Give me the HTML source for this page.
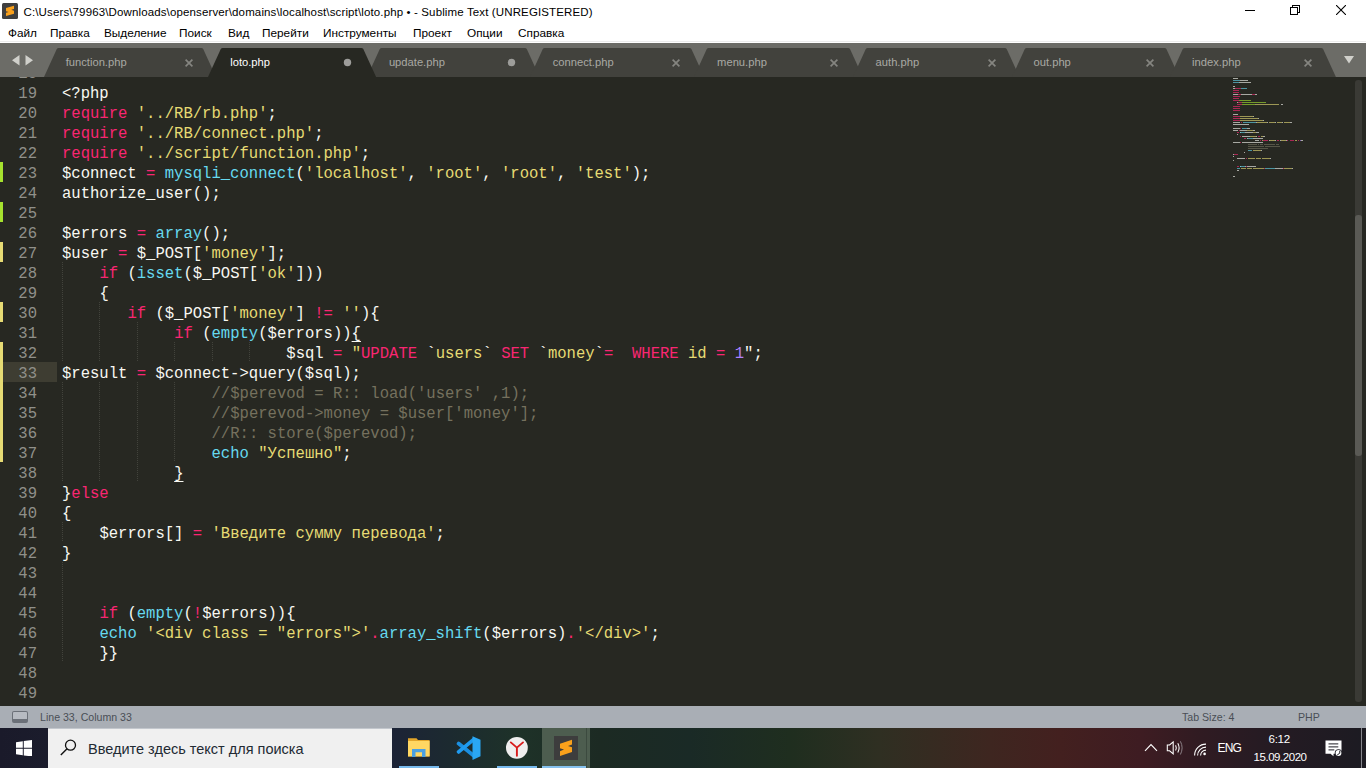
<!DOCTYPE html><html><head><meta charset="utf-8"><style>
*{margin:0;padding:0;box-sizing:border-box}
html,body{width:1366px;height:768px;overflow:hidden;background:#272822}
body{position:relative;font-family:"Liberation Sans",sans-serif}
.a{position:absolute}
.code{position:absolute;margin-top:2px;font-family:"Liberation Mono",monospace;font-size:15.574px;line-height:20px;height:20px;white-space:pre;color:#f8f8f2}
.gn{position:absolute;margin-top:2px;left:0;width:37px;text-align:right;font-family:"Liberation Mono",monospace;font-size:15.574px;line-height:20px;height:20px;color:#90908a}
.tab{position:absolute;font-size:11.2px;line-height:14px;white-space:nowrap}
.mn{position:absolute;top:26px;font-size:11.8px;line-height:15px;color:#000;white-space:nowrap}
.u{text-decoration:underline;text-underline-offset:3px}
</style></head><body>

<div class="a" style="left:0;top:0;width:1366px;height:43px;background:#fff"></div>
<div class="a" style="left:0;top:41px;width:1366px;height:1px;background:#ececec"></div>
<svg class="a" style="left:2px;top:3px" width="16" height="16" viewBox="0 0 16 16"><rect x="0" y="0" width="16" height="16" rx="1.5" fill="#3f3f3f"/><path d="M4 5 L12 2.8 L12 6 L9.3 6.8 L12 7.7 L12 10.8 L4 13 L4 9.8 L6.7 9.1 L4 8.3 Z" fill="#fba11b"/></svg>
<div class="a" style="left:23.5px;top:5px;font-size:11.5px;letter-spacing:0.13px;line-height:15px;color:#000;white-space:nowrap">C:\Users\79963\Downloads\openserver\domains\localhost\script\loto.php • - Sublime Text (UNREGISTERED)</div>
<div class="a" style="left:1245px;top:10px;width:10px;height:1px;background:#000"></div>
<div class="a" style="left:1292px;top:5px;width:8px;height:8px;border:1px solid #000"></div>
<div class="a" style="left:1290px;top:7px;width:8px;height:8px;border:1px solid #000;background:#fff"></div>
<svg class="a" style="left:1336px;top:5px" width="10" height="10"><path d="M0 0 L10 10 M10 0 L0 10" stroke="#000" stroke-width="1.1"/></svg>
<div class="mn" style="left:8px">Файл</div>
<div class="mn" style="left:50px">Правка</div>
<div class="mn" style="left:104px">Выделение</div>
<div class="mn" style="left:179px">Поиск</div>
<div class="mn" style="left:228px">Вид</div>
<div class="mn" style="left:262px">Перейти</div>
<div class="mn" style="left:323px">Инструменты</div>
<div class="mn" style="left:413px">Проект</div>
<div class="mn" style="left:467px">Опции</div>
<div class="mn" style="left:518px">Справка</div>
<div class="a" style="left:0;top:43px;width:1366px;height:34px;background:#6c6c67"></div>
<svg class="a" style="left:11.5px;top:55px" width="22" height="11"><path d="M0 5.2 L7.5 0 L7.5 10.4 Z M13.5 0 L21 5.2 L13.5 10.4 Z" fill="#d0d0cb"/></svg>
<svg class="a" style="left:44.30px;top:48px" width="172.00" height="29" viewBox="0 0 172.00 29"><path d="M0 29 L12.80 1.1 Q13.40 0 14.70 0 L157.30 0 Q158.60 0 159.20 1.1 L172.00 29 Z" fill="#42423d"/></svg>
<svg class="a" style="left:366.70px;top:48px" width="172.60" height="29" viewBox="0 0 172.60 29"><path d="M0 29 L12.80 1.1 Q13.40 0 14.70 0 L157.90 0 Q159.20 0 159.80 1.1 L172.60 29 Z" fill="#42423d"/></svg>
<svg class="a" style="left:529.90px;top:48px" width="174.20" height="29" viewBox="0 0 174.20 29"><path d="M0 29 L12.80 1.1 Q13.40 0 14.70 0 L159.50 0 Q160.80 0 161.40 1.1 L174.20 29 Z" fill="#42423d"/></svg>
<svg class="a" style="left:694.30px;top:48px" width="168.80" height="29" viewBox="0 0 168.80 29"><path d="M0 29 L12.80 1.1 Q13.40 0 14.70 0 L154.10 0 Q155.40 0 156.00 1.1 L168.80 29 Z" fill="#42423d"/></svg>
<svg class="a" style="left:853.20px;top:48px" width="166.50" height="29" viewBox="0 0 166.50 29"><path d="M0 29 L12.80 1.1 Q13.40 0 14.70 0 L151.80 0 Q153.10 0 153.70 1.1 L166.50 29 Z" fill="#42423d"/></svg>
<svg class="a" style="left:1011.50px;top:48px" width="167.20" height="29" viewBox="0 0 167.20 29"><path d="M0 29 L12.80 1.1 Q13.40 0 14.70 0 L152.50 0 Q153.80 0 154.40 1.1 L167.20 29 Z" fill="#42423d"/></svg>
<svg class="a" style="left:1169.70px;top:48px" width="165.90" height="29" viewBox="0 0 165.90 29"><path d="M0 29 L12.80 1.1 Q13.40 0 14.70 0 L151.20 0 Q152.50 0 153.10 1.1 L165.90 29 Z" fill="#42423d"/></svg>
<svg class="a" style="left:207.70px;top:48px" width="168.10" height="29" viewBox="0 0 168.10 29"><path d="M0 29 L12.80 1.1 Q13.40 0 14.70 0 L153.40 0 Q154.70 0 155.30 1.1 L168.10 29 Z" fill="#272822"/></svg>
<div class="tab" style="left:65.7px;top:55.4px;color:#a9a9a4">function.php</div>
<svg class="a" style="left:184.50px;top:58.5px" width="8" height="8"><path d="M0.6 0.6 L7.4 7.4 M7.4 0.6 L0.6 7.4" stroke="#858580" stroke-width="1.7"/></svg>
<div class="tab" style="left:230.2px;top:55.4px;color:#ffffff">loto.php</div>
<svg class="a" style="left:343.00px;top:58px" width="9" height="9"><circle cx="4.5" cy="4.5" r="3.7" fill="#9d9d9a"/></svg>
<div class="tab" style="left:388.9px;top:55.4px;color:#a9a9a4">update.php</div>
<svg class="a" style="left:506.90px;top:58px" width="9" height="9"><circle cx="4.5" cy="4.5" r="3.7" fill="#9d9d9a"/></svg>
<div class="tab" style="left:552.7px;top:55.4px;color:#a9a9a4">connect.php</div>
<svg class="a" style="left:671.50px;top:58.5px" width="8" height="8"><path d="M0.6 0.6 L7.4 7.4 M7.4 0.6 L0.6 7.4" stroke="#858580" stroke-width="1.7"/></svg>
<div class="tab" style="left:717.1px;top:55.4px;color:#a9a9a4">menu.php</div>
<svg class="a" style="left:830.30px;top:58.5px" width="8" height="8"><path d="M0.6 0.6 L7.4 7.4 M7.4 0.6 L0.6 7.4" stroke="#858580" stroke-width="1.7"/></svg>
<div class="tab" style="left:875.6px;top:55.4px;color:#a9a9a4">auth.php</div>
<svg class="a" style="left:988.30px;top:58.5px" width="8" height="8"><path d="M0.6 0.6 L7.4 7.4 M7.4 0.6 L0.6 7.4" stroke="#858580" stroke-width="1.7"/></svg>
<div class="tab" style="left:1033.5px;top:55.4px;color:#a9a9a4">out.php</div>
<svg class="a" style="left:1146.00px;top:58.5px" width="8" height="8"><path d="M0.6 0.6 L7.4 7.4 M7.4 0.6 L0.6 7.4" stroke="#858580" stroke-width="1.7"/></svg>
<div class="tab" style="left:1192.1px;top:55.4px;color:#a9a9a4">index.php</div>
<svg class="a" style="left:1304.30px;top:58.5px" width="8" height="8"><path d="M0.6 0.6 L7.4 7.4 M7.4 0.6 L0.6 7.4" stroke="#858580" stroke-width="1.7"/></svg>
<svg class="a" style="left:1344px;top:56px" width="10" height="8"><path d="M0 0 L10 0 L5 7.5 Z" fill="#d0d0cb"/></svg>
<div class="a" style="left:0;top:77px;width:1366px;height:629px;overflow:hidden;background:#272822"><div class="a" style="left:0;top:-77px;width:1366px;height:768px">
<div class="gn" style="top:62px">18</div>
<div class="gn" style="top:82px">19</div>
<div class="code" style="top:82px;left:62.00px"><span style="color:#f8f8f2">&lt;?php</span></div>
<div class="gn" style="top:102px">20</div>
<div class="code" style="top:102px;left:62.00px"><span style="color:#f92672">require</span><span style="color:#f8f8f2"> </span><span style="color:#e6db74">&#x27;../RB/rb.php&#x27;</span><span style="color:#f8f8f2">;</span></div>
<div class="gn" style="top:122px">21</div>
<div class="code" style="top:122px;left:62.00px"><span style="color:#f92672">require</span><span style="color:#f8f8f2"> </span><span style="color:#e6db74">&#x27;../RB/connect.php&#x27;</span><span style="color:#f8f8f2">;</span></div>
<div class="gn" style="top:142px">22</div>
<div class="code" style="top:142px;left:62.00px"><span style="color:#f92672">require</span><span style="color:#f8f8f2"> </span><span style="color:#e6db74">&#x27;../script/function.php&#x27;</span><span style="color:#f8f8f2">;</span></div>
<div class="a" style="left:0;top:162px;width:3px;height:20px;background:#a6e22e"></div>
<div class="gn" style="top:162px">23</div>
<div class="code" style="top:162px;left:62.00px"><span style="color:#f8f8f2">$connect </span><span style="color:#f92672">=</span><span style="color:#f8f8f2"> </span><span style="color:#66d9ef">mysqli_connect</span><span style="color:#f8f8f2">(</span><span style="color:#e6db74">&#x27;localhost&#x27;</span><span style="color:#f8f8f2">, </span><span style="color:#e6db74">&#x27;root&#x27;</span><span style="color:#f8f8f2">, </span><span style="color:#e6db74">&#x27;root&#x27;</span><span style="color:#f8f8f2">, </span><span style="color:#e6db74">&#x27;test&#x27;</span><span style="color:#f8f8f2">);</span></div>
<div class="gn" style="top:182px">24</div>
<div class="code" style="top:182px;left:62.00px"><span style="color:#f8f8f2">authorize_user();</span></div>
<div class="a" style="left:0;top:202px;width:3px;height:20px;background:#a6e22e"></div>
<div class="gn" style="top:202px">25</div>
<div class="gn" style="top:222px">26</div>
<div class="code" style="top:222px;left:62.00px"><span style="color:#f8f8f2">$errors </span><span style="color:#f92672">=</span><span style="color:#f8f8f2"> </span><span style="color:#66d9ef">array</span><span style="color:#f8f8f2">();</span></div>
<div class="a" style="left:0;top:242px;width:3px;height:20px;background:#e6db74"></div>
<div class="gn" style="top:242px">27</div>
<div class="code" style="top:242px;left:62.00px"><span style="color:#f8f8f2">$user </span><span style="color:#f92672">=</span><span style="color:#f8f8f2"> $_POST[</span><span style="color:#e6db74">&#x27;money&#x27;</span><span style="color:#f8f8f2">];</span></div>
<div class="gn" style="top:262px">28</div>
<div class="a" style="left:62px;top:262px;width:1px;height:20px;background:repeating-linear-gradient(#42433c 0 1px,transparent 1px 2px)"></div>
<div class="code" style="top:262px;left:99.38px"><span style="color:#f92672">if</span><span style="color:#f8f8f2"> (</span><span style="color:#66d9ef">isset</span><span style="color:#f8f8f2">($_POST[</span><span style="color:#e6db74">&#x27;ok&#x27;</span><span style="color:#f8f8f2">]))</span></div>
<div class="gn" style="top:282px">29</div>
<div class="a" style="left:62px;top:282px;width:1px;height:20px;background:repeating-linear-gradient(#42433c 0 1px,transparent 1px 2px)"></div>
<div class="code" style="top:282px;left:99.38px"><span style="color:#f8f8f2">{</span></div>
<div class="a" style="left:0;top:302px;width:3px;height:20px;background:#e6db74"></div>
<div class="gn" style="top:302px">30</div>
<div class="a" style="left:62px;top:302px;width:1px;height:20px;background:repeating-linear-gradient(#42433c 0 1px,transparent 1px 2px)"></div>
<div class="a" style="left:99px;top:302px;width:1px;height:20px;background:repeating-linear-gradient(#42433c 0 1px,transparent 1px 2px)"></div>
<div class="code" style="top:302px;left:127.42px"><span style="color:#f92672">if</span><span style="color:#f8f8f2"> ($_POST[</span><span style="color:#e6db74">&#x27;money&#x27;</span><span style="color:#f8f8f2">] </span><span style="color:#f92672">!=</span><span style="color:#f8f8f2"> </span><span style="color:#e6db74">&#x27;&#x27;</span><span style="color:#f8f8f2">){</span></div>
<div class="gn" style="top:322px">31</div>
<div class="a" style="left:62px;top:322px;width:1px;height:20px;background:repeating-linear-gradient(#42433c 0 1px,transparent 1px 2px)"></div>
<div class="a" style="left:99px;top:322px;width:1px;height:20px;background:repeating-linear-gradient(#42433c 0 1px,transparent 1px 2px)"></div>
<div class="a" style="left:137px;top:322px;width:1px;height:20px;background:repeating-linear-gradient(#42433c 0 1px,transparent 1px 2px)"></div>
<div class="code" style="top:322px;left:174.15px"><span style="color:#f92672">if</span><span style="color:#f8f8f2"> (</span><span style="color:#66d9ef">empty</span><span style="color:#f8f8f2">($errors))</span><span class="u">{</span></div>
<div class="a" style="left:0;top:342px;width:3px;height:20px;background:#e6db74"></div>
<div class="gn" style="top:342px">32</div>
<div class="a" style="left:62px;top:342px;width:1px;height:20px;background:repeating-linear-gradient(#42433c 0 1px,transparent 1px 2px)"></div>
<div class="a" style="left:99px;top:342px;width:1px;height:20px;background:repeating-linear-gradient(#42433c 0 1px,transparent 1px 2px)"></div>
<div class="a" style="left:137px;top:342px;width:1px;height:20px;background:repeating-linear-gradient(#42433c 0 1px,transparent 1px 2px)"></div>
<div class="a" style="left:174px;top:342px;width:1px;height:20px;background:repeating-linear-gradient(#42433c 0 1px,transparent 1px 2px)"></div>
<div class="a" style="left:212px;top:342px;width:1px;height:20px;background:repeating-linear-gradient(#42433c 0 1px,transparent 1px 2px)"></div>
<div class="a" style="left:249px;top:342px;width:1px;height:20px;background:repeating-linear-gradient(#42433c 0 1px,transparent 1px 2px)"></div>
<div class="code" style="top:342px;left:286.30px"><span style="color:#f8f8f2">$sql </span><span style="color:#f92672">=</span><span style="color:#f8f8f2"> </span><span style="color:#e6db74">&quot;</span><span style="color:#f92672">UPDATE</span><span style="color:#f8f8f2"> </span><span style="color:#f8f8f2">`</span><span style="color:#e6db74">users</span><span style="color:#f8f8f2">`</span><span style="color:#f8f8f2"> </span><span style="color:#f92672">SET</span><span style="color:#f8f8f2"> </span><span style="color:#f8f8f2">`</span><span style="color:#e6db74">money</span><span style="color:#f8f8f2">`</span><span style="color:#f92672">=</span><span style="color:#f8f8f2">  </span><span style="color:#f92672">WHERE</span><span style="color:#f8f8f2"> </span><span style="color:#e6db74">id</span><span style="color:#f8f8f2"> </span><span style="color:#f92672">=</span><span style="color:#f8f8f2"> </span><span style="color:#ae81ff">1</span><span style="color:#f8f8f2">&quot;</span><span style="color:#f8f8f2">;</span></div>
<div class="a" style="left:0;top:362px;width:3px;height:20px;background:#e6db74"></div>
<div class="a" style="left:3px;top:362px;width:54px;height:20px;background:#3e3d32"></div>
<div class="gn" style="top:362px">33</div>
<div class="code" style="top:362px;left:62.00px"><span style="color:#f8f8f2">$result </span><span style="color:#f92672">=</span><span style="color:#f8f8f2"> $connect-&gt;query($sql);</span></div>
<div class="a" style="left:0;top:382px;width:3px;height:20px;background:#e6db74"></div>
<div class="gn" style="top:382px">34</div>
<div class="a" style="left:62px;top:382px;width:1px;height:20px;background:repeating-linear-gradient(#42433c 0 1px,transparent 1px 2px)"></div>
<div class="a" style="left:99px;top:382px;width:1px;height:20px;background:repeating-linear-gradient(#42433c 0 1px,transparent 1px 2px)"></div>
<div class="a" style="left:137px;top:382px;width:1px;height:20px;background:repeating-linear-gradient(#42433c 0 1px,transparent 1px 2px)"></div>
<div class="a" style="left:174px;top:382px;width:1px;height:20px;background:repeating-linear-gradient(#42433c 0 1px,transparent 1px 2px)"></div>
<div class="code" style="top:382px;left:211.54px"><span style="color:#75715e">//$perevod = R:: load(&#x27;users&#x27; ,1);</span></div>
<div class="a" style="left:0;top:402px;width:3px;height:20px;background:#e6db74"></div>
<div class="gn" style="top:402px">35</div>
<div class="a" style="left:62px;top:402px;width:1px;height:20px;background:repeating-linear-gradient(#42433c 0 1px,transparent 1px 2px)"></div>
<div class="a" style="left:99px;top:402px;width:1px;height:20px;background:repeating-linear-gradient(#42433c 0 1px,transparent 1px 2px)"></div>
<div class="a" style="left:137px;top:402px;width:1px;height:20px;background:repeating-linear-gradient(#42433c 0 1px,transparent 1px 2px)"></div>
<div class="a" style="left:174px;top:402px;width:1px;height:20px;background:repeating-linear-gradient(#42433c 0 1px,transparent 1px 2px)"></div>
<div class="code" style="top:402px;left:211.54px"><span style="color:#75715e">//$perevod-&gt;money = $user[&#x27;money&#x27;];</span></div>
<div class="a" style="left:0;top:422px;width:3px;height:20px;background:#e6db74"></div>
<div class="gn" style="top:422px">36</div>
<div class="a" style="left:62px;top:422px;width:1px;height:20px;background:repeating-linear-gradient(#42433c 0 1px,transparent 1px 2px)"></div>
<div class="a" style="left:99px;top:422px;width:1px;height:20px;background:repeating-linear-gradient(#42433c 0 1px,transparent 1px 2px)"></div>
<div class="a" style="left:137px;top:422px;width:1px;height:20px;background:repeating-linear-gradient(#42433c 0 1px,transparent 1px 2px)"></div>
<div class="a" style="left:174px;top:422px;width:1px;height:20px;background:repeating-linear-gradient(#42433c 0 1px,transparent 1px 2px)"></div>
<div class="code" style="top:422px;left:211.54px"><span style="color:#75715e">//R:: store($perevod);</span></div>
<div class="a" style="left:0;top:442px;width:3px;height:20px;background:#e6db74"></div>
<div class="gn" style="top:442px">37</div>
<div class="a" style="left:62px;top:442px;width:1px;height:20px;background:repeating-linear-gradient(#42433c 0 1px,transparent 1px 2px)"></div>
<div class="a" style="left:99px;top:442px;width:1px;height:20px;background:repeating-linear-gradient(#42433c 0 1px,transparent 1px 2px)"></div>
<div class="a" style="left:137px;top:442px;width:1px;height:20px;background:repeating-linear-gradient(#42433c 0 1px,transparent 1px 2px)"></div>
<div class="a" style="left:174px;top:442px;width:1px;height:20px;background:repeating-linear-gradient(#42433c 0 1px,transparent 1px 2px)"></div>
<div class="code" style="top:442px;left:211.54px"><span style="color:#66d9ef">echo</span><span style="color:#f8f8f2"> </span><span style="color:#e6db74">&quot;Успешно&quot;</span><span style="color:#f8f8f2">;</span></div>
<div class="gn" style="top:462px">38</div>
<div class="a" style="left:62px;top:462px;width:1px;height:20px;background:repeating-linear-gradient(#42433c 0 1px,transparent 1px 2px)"></div>
<div class="a" style="left:99px;top:462px;width:1px;height:20px;background:repeating-linear-gradient(#42433c 0 1px,transparent 1px 2px)"></div>
<div class="a" style="left:137px;top:462px;width:1px;height:20px;background:repeating-linear-gradient(#42433c 0 1px,transparent 1px 2px)"></div>
<div class="code" style="top:462px;left:174.15px"><span class="u">}</span></div>
<div class="gn" style="top:482px">39</div>
<div class="code" style="top:482px;left:62.00px"><span style="color:#f8f8f2">}</span><span style="color:#f92672">else</span></div>
<div class="gn" style="top:502px">40</div>
<div class="code" style="top:502px;left:62.00px"><span style="color:#f8f8f2">{</span></div>
<div class="gn" style="top:522px">41</div>
<div class="a" style="left:62px;top:522px;width:1px;height:20px;background:repeating-linear-gradient(#42433c 0 1px,transparent 1px 2px)"></div>
<div class="code" style="top:522px;left:99.38px"><span style="color:#f8f8f2">$errors[] </span><span style="color:#f92672">=</span><span style="color:#f8f8f2"> </span><span style="color:#e6db74">&#x27;Введите сумму перевода&#x27;</span><span style="color:#f8f8f2">;</span></div>
<div class="gn" style="top:542px">42</div>
<div class="code" style="top:542px;left:62.00px"><span style="color:#f8f8f2">}</span></div>
<div class="gn" style="top:562px">43</div>
<div class="a" style="left:62px;top:562px;width:1px;height:20px;background:repeating-linear-gradient(#42433c 0 1px,transparent 1px 2px)"></div>
<div class="gn" style="top:582px">44</div>
<div class="a" style="left:62px;top:582px;width:1px;height:20px;background:repeating-linear-gradient(#42433c 0 1px,transparent 1px 2px)"></div>
<div class="gn" style="top:602px">45</div>
<div class="a" style="left:62px;top:602px;width:1px;height:20px;background:repeating-linear-gradient(#42433c 0 1px,transparent 1px 2px)"></div>
<div class="code" style="top:602px;left:99.38px"><span style="color:#f92672">if</span><span style="color:#f8f8f2"> (</span><span style="color:#66d9ef">empty</span><span style="color:#f8f8f2">(</span><span style="color:#f92672">!</span><span style="color:#f8f8f2">$errors)){</span></div>
<div class="gn" style="top:622px">46</div>
<div class="a" style="left:62px;top:622px;width:1px;height:20px;background:repeating-linear-gradient(#42433c 0 1px,transparent 1px 2px)"></div>
<div class="code" style="top:622px;left:99.38px"><span style="color:#66d9ef">echo</span><span style="color:#f8f8f2"> </span><span style="color:#e6db74">&#x27;&lt;div class = &quot;errors&quot;&gt;&#x27;</span><span style="color:#f92672">.</span><span style="color:#66d9ef">array_shift</span><span style="color:#f8f8f2">($errors)</span><span style="color:#f92672">.</span><span style="color:#e6db74">&#x27;&lt;/div&gt;&#x27;</span><span style="color:#f8f8f2">;</span></div>
<div class="gn" style="top:642px">47</div>
<div class="a" style="left:62px;top:642px;width:1px;height:20px;background:repeating-linear-gradient(#42433c 0 1px,transparent 1px 2px)"></div>
<div class="code" style="top:642px;left:99.38px"><span style="color:#f8f8f2">}}</span></div>
<div class="gn" style="top:662px">48</div>
<div class="gn" style="top:682px">49</div>
<div class="gn" style="top:702px">50</div>
<div class="code" style="top:702px;left:62.00px"><span style="color:#f8f8f2">?&gt;</span></div>
<div class="a" style="left:1233.00px;top:77.5px;width:4.65px;height:1.1px;background:#f8f8f2;opacity:.62"></div><div class="a" style="left:1233.00px;top:79.5px;width:6.51px;height:1.1px;background:#66d9ef;opacity:.62"></div><div class="a" style="left:1239.51px;top:79.5px;width:8.37px;height:1.1px;background:#f8f8f2;opacity:.62"></div><div class="a" style="left:1233.00px;top:81.5px;width:5.58px;height:1.1px;background:#66d9ef;opacity:.62"></div><div class="a" style="left:1238.58px;top:81.5px;width:12.09px;height:1.1px;background:#f8f8f2;opacity:.62"></div><div class="a" style="left:1233.00px;top:85.5px;width:1.86px;height:1.1px;background:#f8f8f2;opacity:.62"></div><div class="a" style="left:1233.00px;top:87.5px;width:1.86px;height:1.1px;background:#f8f8f2;opacity:.62"></div><div class="a" style="left:1234.86px;top:87.5px;width:6.51px;height:1.1px;background:#f92672;opacity:.62"></div><div class="a" style="left:1241.37px;top:87.5px;width:5.58px;height:1.1px;background:#66d9ef;opacity:.62"></div><div class="a" style="left:1233.00px;top:89.5px;width:5.58px;height:1.1px;background:#f92672;opacity:.62"></div><div class="a" style="left:1233.00px;top:91.5px;width:5.58px;height:1.1px;background:#f92672;opacity:.62"></div><div class="a" style="left:1233.00px;top:93.5px;width:4.65px;height:1.1px;background:#f8f8f2;opacity:.62"></div><div class="a" style="left:1237.65px;top:93.5px;width:3.72px;height:1.1px;background:#f92672;opacity:.62"></div><div class="a" style="left:1241.37px;top:93.5px;width:10.23px;height:1.1px;background:#f8f8f2;opacity:.62"></div><div class="a" style="left:1251.60px;top:93.5px;width:3.72px;height:1.1px;background:#f92672;opacity:.62"></div><div class="a" style="left:1255.32px;top:93.5px;width:1.86px;height:1.1px;background:#f8f8f2;opacity:.62"></div><div class="a" style="left:1233.00px;top:95.5px;width:6.51px;height:1.1px;background:#f92672;opacity:.62"></div><div class="a" style="left:1233.00px;top:97.5px;width:5.58px;height:1.1px;background:#f92672;opacity:.62"></div><div class="a" style="left:1233.00px;top:99.5px;width:5.58px;height:1.1px;background:#f92672;opacity:.62"></div><div class="a" style="left:1238.58px;top:99.5px;width:12.09px;height:1.1px;background:#a6e22e;opacity:.62"></div><div class="a" style="left:1236.72px;top:101.5px;width:0.93px;height:1.1px;background:#f8f8f2;opacity:.62"></div><div class="a" style="left:1237.65px;top:101.5px;width:4.65px;height:1.1px;background:#f92672;opacity:.62"></div><div class="a" style="left:1242.30px;top:101.5px;width:23.25px;height:1.1px;background:#a6e22e;opacity:.62"></div><div class="a" style="left:1236.72px;top:103.5px;width:5.58px;height:1.1px;background:#f92672;opacity:.62"></div><div class="a" style="left:1242.30px;top:103.5px;width:13.02px;height:1.1px;background:#a6e22e;opacity:.62"></div><div class="a" style="left:1255.32px;top:103.5px;width:24.18px;height:1.1px;background:#e6db74;opacity:.62"></div><div class="a" style="left:1281.36px;top:103.5px;width:1.86px;height:1.1px;background:#f8f8f2;opacity:.62"></div><div class="a" style="left:1233.00px;top:105.5px;width:6.51px;height:1.1px;background:#f92672;opacity:.62"></div><div class="a" style="left:1233.00px;top:107.5px;width:6.51px;height:1.1px;background:#f92672;opacity:.62"></div><div class="a" style="left:1233.00px;top:109.5px;width:6.51px;height:1.1px;background:#f92672;opacity:.62"></div><div class="a" style="left:1233.00px;top:113.5px;width:4.65px;height:1.1px;background:#f8f8f2;opacity:.62"></div><div class="a" style="left:1233.00px;top:115.5px;width:6.51px;height:1.1px;background:#f92672;opacity:.62"></div><div class="a" style="left:1240.44px;top:115.5px;width:13.02px;height:1.1px;background:#e6db74;opacity:.62"></div><div class="a" style="left:1253.46px;top:115.5px;width:0.93px;height:1.1px;background:#f8f8f2;opacity:.62"></div><div class="a" style="left:1233.00px;top:117.5px;width:6.51px;height:1.1px;background:#f92672;opacity:.62"></div><div class="a" style="left:1240.44px;top:117.5px;width:17.67px;height:1.1px;background:#e6db74;opacity:.62"></div><div class="a" style="left:1258.11px;top:117.5px;width:0.93px;height:1.1px;background:#f8f8f2;opacity:.62"></div><div class="a" style="left:1233.00px;top:119.5px;width:6.51px;height:1.1px;background:#f92672;opacity:.62"></div><div class="a" style="left:1240.44px;top:119.5px;width:22.32px;height:1.1px;background:#e6db74;opacity:.62"></div><div class="a" style="left:1262.76px;top:119.5px;width:0.93px;height:1.1px;background:#f8f8f2;opacity:.62"></div><div class="a" style="left:1233.00px;top:121.5px;width:7.44px;height:1.1px;background:#f8f8f2;opacity:.62"></div><div class="a" style="left:1241.37px;top:121.5px;width:0.93px;height:1.1px;background:#f92672;opacity:.62"></div><div class="a" style="left:1243.23px;top:121.5px;width:13.02px;height:1.1px;background:#66d9ef;opacity:.62"></div><div class="a" style="left:1256.25px;top:121.5px;width:0.93px;height:1.1px;background:#f8f8f2;opacity:.62"></div><div class="a" style="left:1257.18px;top:121.5px;width:10.23px;height:1.1px;background:#e6db74;opacity:.62"></div><div class="a" style="left:1267.41px;top:121.5px;width:0.93px;height:1.1px;background:#f8f8f2;opacity:.62"></div><div class="a" style="left:1269.27px;top:121.5px;width:5.58px;height:1.1px;background:#e6db74;opacity:.62"></div><div class="a" style="left:1274.85px;top:121.5px;width:0.93px;height:1.1px;background:#f8f8f2;opacity:.62"></div><div class="a" style="left:1276.71px;top:121.5px;width:5.58px;height:1.1px;background:#e6db74;opacity:.62"></div><div class="a" style="left:1282.29px;top:121.5px;width:0.93px;height:1.1px;background:#f8f8f2;opacity:.62"></div><div class="a" style="left:1284.15px;top:121.5px;width:5.58px;height:1.1px;background:#e6db74;opacity:.62"></div><div class="a" style="left:1289.73px;top:121.5px;width:1.86px;height:1.1px;background:#f8f8f2;opacity:.62"></div><div class="a" style="left:1233.00px;top:123.5px;width:15.81px;height:1.1px;background:#f8f8f2;opacity:.62"></div><div class="a" style="left:1233.00px;top:127.5px;width:6.51px;height:1.1px;background:#f8f8f2;opacity:.62"></div><div class="a" style="left:1240.44px;top:127.5px;width:0.93px;height:1.1px;background:#f92672;opacity:.62"></div><div class="a" style="left:1242.30px;top:127.5px;width:4.65px;height:1.1px;background:#66d9ef;opacity:.62"></div><div class="a" style="left:1246.95px;top:127.5px;width:2.79px;height:1.1px;background:#f8f8f2;opacity:.62"></div><div class="a" style="left:1233.00px;top:129.5px;width:4.65px;height:1.1px;background:#f8f8f2;opacity:.62"></div><div class="a" style="left:1238.58px;top:129.5px;width:0.93px;height:1.1px;background:#f92672;opacity:.62"></div><div class="a" style="left:1240.44px;top:129.5px;width:6.51px;height:1.1px;background:#f8f8f2;opacity:.62"></div><div class="a" style="left:1246.95px;top:129.5px;width:6.51px;height:1.1px;background:#e6db74;opacity:.62"></div><div class="a" style="left:1253.46px;top:129.5px;width:1.86px;height:1.1px;background:#f8f8f2;opacity:.62"></div><div class="a" style="left:1236.72px;top:131.5px;width:1.86px;height:1.1px;background:#f92672;opacity:.62"></div><div class="a" style="left:1239.51px;top:131.5px;width:0.93px;height:1.1px;background:#f8f8f2;opacity:.62"></div><div class="a" style="left:1240.44px;top:131.5px;width:4.65px;height:1.1px;background:#66d9ef;opacity:.62"></div><div class="a" style="left:1245.09px;top:131.5px;width:7.44px;height:1.1px;background:#f8f8f2;opacity:.62"></div><div class="a" style="left:1252.53px;top:131.5px;width:3.72px;height:1.1px;background:#e6db74;opacity:.62"></div><div class="a" style="left:1256.25px;top:131.5px;width:2.79px;height:1.1px;background:#f8f8f2;opacity:.62"></div><div class="a" style="left:1236.72px;top:133.5px;width:0.93px;height:1.1px;background:#f8f8f2;opacity:.62"></div><div class="a" style="left:1239.51px;top:135.5px;width:1.86px;height:1.1px;background:#f92672;opacity:.62"></div><div class="a" style="left:1242.30px;top:135.5px;width:7.44px;height:1.1px;background:#f8f8f2;opacity:.62"></div><div class="a" style="left:1249.74px;top:135.5px;width:6.51px;height:1.1px;background:#e6db74;opacity:.62"></div><div class="a" style="left:1256.25px;top:135.5px;width:0.93px;height:1.1px;background:#f8f8f2;opacity:.62"></div><div class="a" style="left:1258.11px;top:135.5px;width:1.86px;height:1.1px;background:#f92672;opacity:.62"></div><div class="a" style="left:1260.90px;top:135.5px;width:1.86px;height:1.1px;background:#e6db74;opacity:.62"></div><div class="a" style="left:1262.76px;top:135.5px;width:1.86px;height:1.1px;background:#f8f8f2;opacity:.62"></div><div class="a" style="left:1244.16px;top:137.5px;width:1.86px;height:1.1px;background:#f92672;opacity:.62"></div><div class="a" style="left:1246.95px;top:137.5px;width:0.93px;height:1.1px;background:#f8f8f2;opacity:.62"></div><div class="a" style="left:1247.88px;top:137.5px;width:4.65px;height:1.1px;background:#66d9ef;opacity:.62"></div><div class="a" style="left:1252.53px;top:137.5px;width:9.30px;height:1.1px;background:#f8f8f2;opacity:.62"></div><div class="a" style="left:1261.83px;top:137.5px;width:0.93px;height:1.1px;background:#f8f8f2;opacity:.62"></div><div class="a" style="left:1255.32px;top:139.5px;width:3.72px;height:1.1px;background:#f8f8f2;opacity:.62"></div><div class="a" style="left:1259.97px;top:139.5px;width:0.93px;height:1.1px;background:#f92672;opacity:.62"></div><div class="a" style="left:1261.83px;top:139.5px;width:0.93px;height:1.1px;background:#e6db74;opacity:.62"></div><div class="a" style="left:1262.76px;top:139.5px;width:5.58px;height:1.1px;background:#f92672;opacity:.62"></div><div class="a" style="left:1269.27px;top:139.5px;width:0.93px;height:1.1px;background:#f8f8f2;opacity:.62"></div><div class="a" style="left:1270.20px;top:139.5px;width:4.65px;height:1.1px;background:#e6db74;opacity:.62"></div><div class="a" style="left:1274.85px;top:139.5px;width:0.93px;height:1.1px;background:#f8f8f2;opacity:.62"></div><div class="a" style="left:1276.71px;top:139.5px;width:2.79px;height:1.1px;background:#f92672;opacity:.62"></div><div class="a" style="left:1280.43px;top:139.5px;width:0.93px;height:1.1px;background:#f8f8f2;opacity:.62"></div><div class="a" style="left:1281.36px;top:139.5px;width:4.65px;height:1.1px;background:#e6db74;opacity:.62"></div><div class="a" style="left:1286.01px;top:139.5px;width:0.93px;height:1.1px;background:#f8f8f2;opacity:.62"></div><div class="a" style="left:1286.94px;top:139.5px;width:0.93px;height:1.1px;background:#f92672;opacity:.62"></div><div class="a" style="left:1289.73px;top:139.5px;width:4.65px;height:1.1px;background:#f92672;opacity:.62"></div><div class="a" style="left:1295.31px;top:139.5px;width:1.86px;height:1.1px;background:#e6db74;opacity:.62"></div><div class="a" style="left:1298.10px;top:139.5px;width:0.93px;height:1.1px;background:#f92672;opacity:.62"></div><div class="a" style="left:1299.96px;top:139.5px;width:0.93px;height:1.1px;background:#ae81ff;opacity:.62"></div><div class="a" style="left:1300.89px;top:139.5px;width:0.93px;height:1.1px;background:#f8f8f2;opacity:.62"></div><div class="a" style="left:1301.82px;top:139.5px;width:0.93px;height:1.1px;background:#f8f8f2;opacity:.62"></div><div class="a" style="left:1233.00px;top:141.5px;width:6.51px;height:1.1px;background:#f8f8f2;opacity:.62"></div><div class="a" style="left:1240.44px;top:141.5px;width:0.93px;height:1.1px;background:#f92672;opacity:.62"></div><div class="a" style="left:1242.30px;top:141.5px;width:20.46px;height:1.1px;background:#f8f8f2;opacity:.62"></div><div class="a" style="left:1247.88px;top:143.5px;width:9.30px;height:1.1px;background:#75715e;opacity:.62"></div><div class="a" style="left:1258.11px;top:143.5px;width:0.93px;height:1.1px;background:#75715e;opacity:.62"></div><div class="a" style="left:1259.97px;top:143.5px;width:2.79px;height:1.1px;background:#75715e;opacity:.62"></div><div class="a" style="left:1263.69px;top:143.5px;width:11.16px;height:1.1px;background:#75715e;opacity:.62"></div><div class="a" style="left:1275.78px;top:143.5px;width:3.72px;height:1.1px;background:#75715e;opacity:.62"></div><div class="a" style="left:1247.88px;top:145.5px;width:15.81px;height:1.1px;background:#75715e;opacity:.62"></div><div class="a" style="left:1264.62px;top:145.5px;width:0.93px;height:1.1px;background:#75715e;opacity:.62"></div><div class="a" style="left:1266.48px;top:145.5px;width:13.95px;height:1.1px;background:#75715e;opacity:.62"></div><div class="a" style="left:1247.88px;top:147.5px;width:4.65px;height:1.1px;background:#75715e;opacity:.62"></div><div class="a" style="left:1253.46px;top:147.5px;width:14.88px;height:1.1px;background:#75715e;opacity:.62"></div><div class="a" style="left:1247.88px;top:149.5px;width:3.72px;height:1.1px;background:#66d9ef;opacity:.62"></div><div class="a" style="left:1252.53px;top:149.5px;width:8.37px;height:1.1px;background:#e6db74;opacity:.62"></div><div class="a" style="left:1260.90px;top:149.5px;width:0.93px;height:1.1px;background:#f8f8f2;opacity:.62"></div><div class="a" style="left:1244.16px;top:151.5px;width:0.93px;height:1.1px;background:#f8f8f2;opacity:.62"></div><div class="a" style="left:1233.00px;top:153.5px;width:0.93px;height:1.1px;background:#f8f8f2;opacity:.62"></div><div class="a" style="left:1233.93px;top:153.5px;width:3.72px;height:1.1px;background:#f92672;opacity:.62"></div><div class="a" style="left:1233.00px;top:155.5px;width:0.93px;height:1.1px;background:#f8f8f2;opacity:.62"></div><div class="a" style="left:1236.72px;top:157.5px;width:8.37px;height:1.1px;background:#f8f8f2;opacity:.62"></div><div class="a" style="left:1246.02px;top:157.5px;width:0.93px;height:1.1px;background:#f92672;opacity:.62"></div><div class="a" style="left:1247.88px;top:157.5px;width:7.44px;height:1.1px;background:#e6db74;opacity:.62"></div><div class="a" style="left:1256.25px;top:157.5px;width:4.65px;height:1.1px;background:#e6db74;opacity:.62"></div><div class="a" style="left:1261.83px;top:157.5px;width:8.37px;height:1.1px;background:#e6db74;opacity:.62"></div><div class="a" style="left:1270.20px;top:157.5px;width:0.93px;height:1.1px;background:#f8f8f2;opacity:.62"></div><div class="a" style="left:1233.00px;top:159.5px;width:0.93px;height:1.1px;background:#f8f8f2;opacity:.62"></div><div class="a" style="left:1236.72px;top:165.5px;width:1.86px;height:1.1px;background:#f92672;opacity:.62"></div><div class="a" style="left:1239.51px;top:165.5px;width:0.93px;height:1.1px;background:#f8f8f2;opacity:.62"></div><div class="a" style="left:1240.44px;top:165.5px;width:4.65px;height:1.1px;background:#66d9ef;opacity:.62"></div><div class="a" style="left:1245.09px;top:165.5px;width:0.93px;height:1.1px;background:#f8f8f2;opacity:.62"></div><div class="a" style="left:1246.02px;top:165.5px;width:0.93px;height:1.1px;background:#f92672;opacity:.62"></div><div class="a" style="left:1246.95px;top:165.5px;width:9.30px;height:1.1px;background:#f8f8f2;opacity:.62"></div><div class="a" style="left:1236.72px;top:167.5px;width:3.72px;height:1.1px;background:#66d9ef;opacity:.62"></div><div class="a" style="left:1241.37px;top:167.5px;width:4.65px;height:1.1px;background:#e6db74;opacity:.62"></div><div class="a" style="left:1246.95px;top:167.5px;width:4.65px;height:1.1px;background:#e6db74;opacity:.62"></div><div class="a" style="left:1252.53px;top:167.5px;width:0.93px;height:1.1px;background:#e6db74;opacity:.62"></div><div class="a" style="left:1254.39px;top:167.5px;width:9.30px;height:1.1px;background:#e6db74;opacity:.62"></div><div class="a" style="left:1263.69px;top:167.5px;width:0.93px;height:1.1px;background:#f92672;opacity:.62"></div><div class="a" style="left:1264.62px;top:167.5px;width:10.23px;height:1.1px;background:#66d9ef;opacity:.62"></div><div class="a" style="left:1274.85px;top:167.5px;width:8.37px;height:1.1px;background:#f8f8f2;opacity:.62"></div><div class="a" style="left:1283.22px;top:167.5px;width:0.93px;height:1.1px;background:#f92672;opacity:.62"></div><div class="a" style="left:1284.15px;top:167.5px;width:7.44px;height:1.1px;background:#e6db74;opacity:.62"></div><div class="a" style="left:1291.59px;top:167.5px;width:0.93px;height:1.1px;background:#f8f8f2;opacity:.62"></div><div class="a" style="left:1236.72px;top:169.5px;width:1.86px;height:1.1px;background:#f8f8f2;opacity:.62"></div><div class="a" style="left:1233.00px;top:175.5px;width:1.86px;height:1.1px;background:#f8f8f2;opacity:.62"></div>
</div></div>
<div class="a" style="left:1355px;top:80px;width:7px;height:622px;border-radius:3px;background:#3a3a35"></div>
<div class="a" style="left:1355px;top:215px;width:7px;height:241px;border-radius:3px;background:#5a5a55"></div>
<div class="a" style="left:0;top:706px;width:1366px;height:22px;background:#a9aeb5"></div>
<div class="a" style="left:12px;top:711px;width:16px;height:12px;border-radius:2px;background:#b7bbc2;border:1px solid #6b7078;border-bottom:4px solid #6b7078"></div>
<div class="a" style="left:40px;top:711px;font-size:10.6px;line-height:13px;color:#4a4e55;white-space:nowrap">Line 33, Column 33</div>
<div class="a" style="left:1182px;top:711px;font-size:10.6px;line-height:13px;color:#4a4e55;white-space:nowrap">Tab Size: 4</div>
<div class="a" style="left:1298px;top:711px;font-size:10.6px;line-height:13px;color:#4a4e55">PHP</div>
<div class="a" style="left:0;top:728px;width:1366px;height:40px;background:linear-gradient(90deg,#1a1a2a 0px,#1b1c2c 48px,#1c2336 392px,#1c2a30 450px,#1e3228 520px,#1c2a23 600px,#1a2a26 690px,#1f2e1f 790px,#2f2f22 880px,#3e2620 990px,#43201f 1060px,#3e1c22 1140px,#301b22 1200px,#261b23 1260px,#1c1b22 1366px)"></div>
<div class="a" style="left:48px;top:728px;width:344px;height:40px;background:#f0f0f0;border-top:1px solid #c3c7cd"></div>
<svg class="a" style="left:15.7px;top:739.7px" width="16.5" height="16.5" viewBox="0 0 17 17"><path d="M0 2.3 L7 1.3 L7 8 L0 8 Z M8 1.1 L17 0 L17 8 L8 8 Z M0 9 L7 9 L7 15.7 L0 14.7 Z M8 9 L17 9 L17 17 L8 15.9 Z" fill="#fff"/></svg>
<svg class="a" style="left:60px;top:738px" width="18" height="18"><circle cx="10.5" cy="7.2" r="5" fill="none" stroke="#111" stroke-width="1.3"/><path d="M6.8 10.9 L0.8 17" stroke="#111" stroke-width="1.4"/></svg>
<div class="a" style="left:88px;top:740px;font-size:14.5px;line-height:18px;color:#222a33;white-space:nowrap">Введите здесь текст для поиска</div>
<svg class="a" style="left:408px;top:738px" width="22" height="19" viewBox="0 0 22 19"><path d="M0 0.3 L8.5 0.3 L10 2 L21.6 2 L21.6 18.4 L0 18.4 Z" fill="#e3a62a"/><path d="M0 3 L21.6 3 L21.6 18.4 L0 18.4 Z" fill="#ffd763"/><path d="M4 11 L17.5 11 L17.5 19 L14 19 L14 14.2 L7.5 14.2 L7.5 19 L4 19 Z" fill="#4aa0e2"/></svg>
<div class="a" style="left:399px;top:766px;width:40px;height:2px;background:#76b9ed"></div>
<svg class="a" style="left:455.5px;top:736px" width="25" height="24" viewBox="0 0 25 24"><path d="M2.6 7.6 L17.5 19.5" stroke="#1b8fe0" stroke-width="3.8" stroke-linecap="round"/><path d="M2.6 15.9 L17.5 3.6" stroke="#1f9bef" stroke-width="3.8" stroke-linecap="round"/><path d="M16.5 0.3 L24.5 3.7 L24.5 20.3 L16.5 24 Z" fill="#2aa7f4"/></svg>
<svg class="a" style="left:506px;top:736px" width="24" height="24"><circle cx="10.9" cy="11.8" r="10.9" fill="#efeeee"/><path d="M4.8 6.4 L10.9 11.6 L17 6.4 M10.9 11.6 L10.9 19.8" stroke="#d81b1b" stroke-width="1.9" fill="none" stroke-linecap="round"/></svg>
<div class="a" style="left:497px;top:766px;width:40px;height:2px;background:#76b9ed"></div>
<div class="a" style="left:542px;top:728px;width:48px;height:40px;background:#4d5d4f"></div><div class="a" style="left:586px;top:728px;width:1px;height:40px;background:#3c4a3f"></div>
<svg class="a" style="left:554px;top:736px" width="24" height="24" viewBox="0 0 24 24"><rect width="24" height="24" fill="#3d3d3d"/><path d="M6 7.8 L18 3.7 L18 8.6 L14 9.9 L18 11.2 L18 16 L6 20 L6 15.2 L10 13.6 L6 12.2 Z" fill="#fba11b"/></svg>
<div class="a" style="left:542px;top:766px;width:44px;height:2px;background:#86c1ee"></div>
<svg class="a" style="left:1144px;top:743px" width="14" height="9"><path d="M1 7.8 L7 1.5 L13 7.8" stroke="#fff" stroke-width="1.1" fill="none"/></svg>
<svg class="a" style="left:1166px;top:740px" width="20" height="17"><path d="M1.3 5 L3.6 5 L7.2 1.8 L7.2 13.9 L3.6 10.8 L1.3 10.8 Z" stroke="#fff" stroke-width="1.05" fill="none"/><path d="M9.6 5.2 Q11 7.9 9.6 10.6" stroke="#fff" stroke-width="1.05" fill="none"/><path d="M11.8 3.3 Q14.4 7.9 11.8 12.5" stroke="#fff" stroke-width="1.05" fill="none"/><path d="M14.4 1.3 Q17.8 7.9 14.4 14.5" stroke="#8a7f85" stroke-width="1" fill="none"/></svg>
<svg class="a" style="left:1193px;top:742px" width="15" height="14"><path d="M1.6 13.5 A11.4 11.4 0 0 1 13 2.1 M4.6 13.5 A8.4 8.4 0 0 1 13 5.1 M7.6 13.5 A5.4 5.4 0 0 1 13 8.1" stroke="#fff" stroke-width="1.05" fill="none"/><circle cx="11.6" cy="11.9" r="1.3" fill="#fff"/></svg>
<div class="a" style="left:1217.6px;top:741px;font-size:12px;letter-spacing:-0.85px;line-height:15px;color:#fff">ENG</div>
<div class="a" style="left:1268.5px;top:731.3px;font-size:11.6px;letter-spacing:-0.3px;line-height:15px;color:#fff">6:12</div>
<div class="a" style="left:1253.5px;top:749.5px;font-size:11.5px;letter-spacing:-0.45px;line-height:15px;color:#fff">15.09.2020</div>
<svg class="a" style="left:1324.5px;top:739.5px" width="18" height="18"><path d="M0.5 0.5 L16.5 0.5 L16.5 13.7 L8.5 13.7 L8.5 16.3 L5.5 13.7 L0.5 13.7 Z" fill="#fff"/><path d="M3.5 3.9 L13.3 3.9 M3.5 6.9 L13.3 6.9 M3.5 9.9 L9.3 9.9" stroke="#1e1c24" stroke-width="1"/><circle cx="13.5" cy="13" r="3.8" fill="#1e1c24"/><circle cx="13.5" cy="13" r="2.9" fill="#fff"/><path d="M14.8 10.8 Q16 13.5 12.2 15" stroke="#1e1c24" stroke-width="1" fill="none"/></svg>
<div class="a" style="left:1361px;top:728px;width:1px;height:40px;background:#85858b"></div>
</body></html>
